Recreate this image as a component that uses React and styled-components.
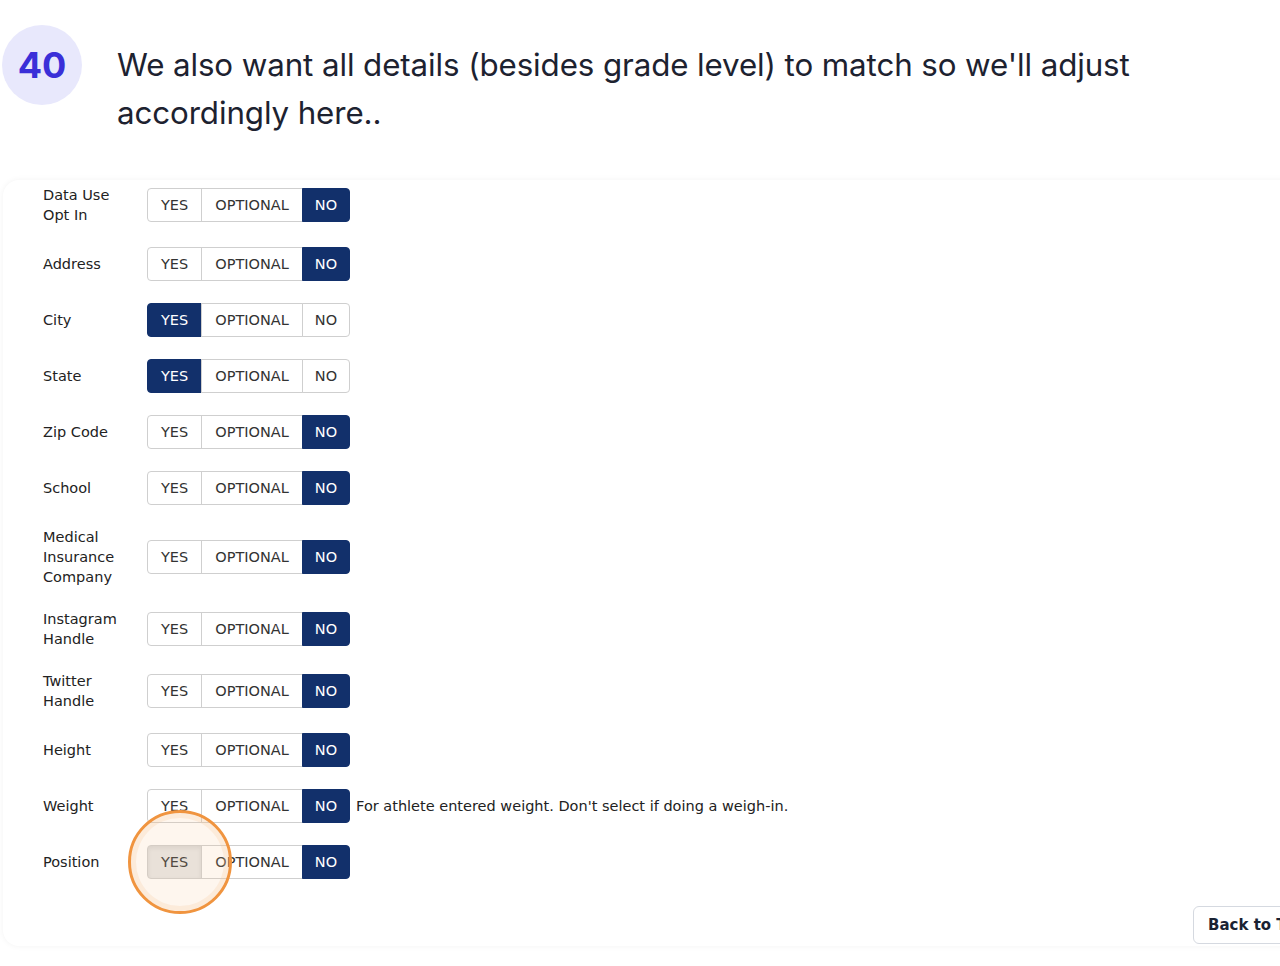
import React from 'react';
import styled, { createGlobalStyle } from 'styled-components';

const GlobalStyle = createGlobalStyle`
  html, body {
    margin: 0;
    padding: 0;
    background: #ffffff;
    overflow: hidden;
  }
  body {
    font-family: "DejaVu Sans", Verdana, sans-serif;
  }
`;

const Page = styled.div`
  width: 1280px;
  height: 966px;
  position: relative;
  overflow: hidden;
`;

const Header = styled.div`
  display: flex;
  align-items: flex-start;
  gap: 35px;
  padding: 25px 0 0 2px;
`;

const StepBadge = styled.div`
  flex: none;
  width: 80px;
  height: 80px;
  border-radius: 50%;
  background: #e8e8fc;
  color: #3a2fd8;
  display: flex;
  align-items: center;
  justify-content: center;
  font-family: Inter, "Open Sans", sans-serif;
  font-weight: 700;
  font-size: 36px;
`;

const StepText = styled.p`
  margin: 16px 0 0;
  max-width: 1040px;
  font-family: Inter, "Open Sans", sans-serif;
  font-size: 31.3px;
  line-height: 48px;
  color: #1d2230;
  letter-spacing: -0.1px;
`;

const Card = styled.div`
  margin: 43px 0 0 3px;
  width: 1340px;
  height: 766px;
  box-sizing: border-box;
  border-radius: 16px;
  background: #fff;
  box-shadow: 0 0 6px rgba(0, 0, 0, 0.05);
  padding: 5px 0 0 40px;
`;

const Row = styled.div`
  display: flex;
  align-items: center;
  min-height: 34px;
  margin-bottom: 22px;
`;

const Label = styled.div`
  width: 90px;
  margin-right: 14px;
  font-size: 14.5px;
  line-height: 20px;
  color: #222;
`;

const Group = styled.div`
  position: relative;
  display: flex;
`;

const radius = {
  first: '4px 0 0 4px',
  last: '0 4px 4px 0',
  mid: '0',
};

const Seg = styled.div`
  height: 34px;
  box-sizing: border-box;
  padding: 0 ${(p) => (p.$edge === 'last' ? '12px' : '13px')};
  display: flex;
  align-items: center;
  font-size: 14.5px;
  border: 1px solid ${(p) => (p.$on ? '#12306b' : '#cfcfcf')};
  margin-left: ${(p) => (p.$edge === 'first' ? '0' : '-1px')};
  border-radius: ${(p) => radius[p.$edge]};
  background: ${(p) => (p.$on ? '#12306b' : p.$pressed ? '#e6e6e6' : '#fff')};
  color: ${(p) => (p.$on ? '#fff' : '#333')};
  box-shadow: ${(p) => (p.$pressed ? 'inset 0 2px 4px rgba(0,0,0,0.08)' : 'none')};
`;

const Help = styled.span`
  margin-left: 6px;
  font-size: 14.5px;
  color: #222;
`;

const Highlight = styled.div`
  position: absolute;
  left: -19px;
  top: -35px;
  width: 104px;
  height: 104px;
  box-sizing: border-box;
  border-radius: 50%;
  border: 3.5px solid #f0943f;
  background: rgba(246, 196, 150, 0.16);
  box-shadow: inset 0 0 0 5px rgba(246, 196, 150, 0.22);
  pointer-events: none;
`;

const BackTop = styled.button`
  position: absolute;
  left: 1193px;
  top: 906px;
  height: 38px;
  padding: 0 14px;
  background: #fff;
  border: 1px solid #d5d9e0;
  border-radius: 6px;
  font-family: "DejaVu Sans", sans-serif;
  font-weight: 700;
  font-size: 15px;
  color: #1a2233;
  white-space: nowrap;
`;

const options = [
  ['YES', 'first'],
  ['OPTIONAL', 'mid'],
  ['NO', 'last'],
];

const rows = [
  { label: 'Data Use Opt In', v: 'NO' },
  { label: 'Address', v: 'NO' },
  { label: 'City', v: 'YES' },
  { label: 'State', v: 'YES' },
  { label: 'Zip Code', v: 'NO' },
  { label: 'School', v: 'NO' },
  { label: 'Medical Insurance Company', v: 'NO' },
  { label: 'Instagram Handle', v: 'NO' },
  { label: 'Twitter Handle', v: 'NO' },
  { label: 'Height', v: 'NO' },
  { label: 'Weight', v: 'NO', help: "For athlete entered weight. Don't select if doing a weigh-in." },
  { label: 'Position', v: 'NO', pressed: true },
];

export default function App() {
  return (
    <Page>
      <GlobalStyle />
      <Header>
        <StepBadge>40</StepBadge>
        <StepText>
          We also want all details (besides grade level) to match so we'll adjust accordingly here..
        </StepText>
      </Header>
      <Card>
        {rows.map((r) => (
          <Row key={r.label}>
            <Label>{r.label}</Label>
            <Group>
              {options.map(([o, edge]) => (
                <Seg key={o} $edge={edge} $on={r.v === o} $pressed={r.pressed && o === 'YES'}>
                  {o}
                </Seg>
              ))}
              {r.pressed && <Highlight />}
            </Group>
            {r.help && <Help>{r.help}</Help>}
          </Row>
        ))}
      </Card>
      <BackTop>Back to Top</BackTop>
    </Page>
  );
}
